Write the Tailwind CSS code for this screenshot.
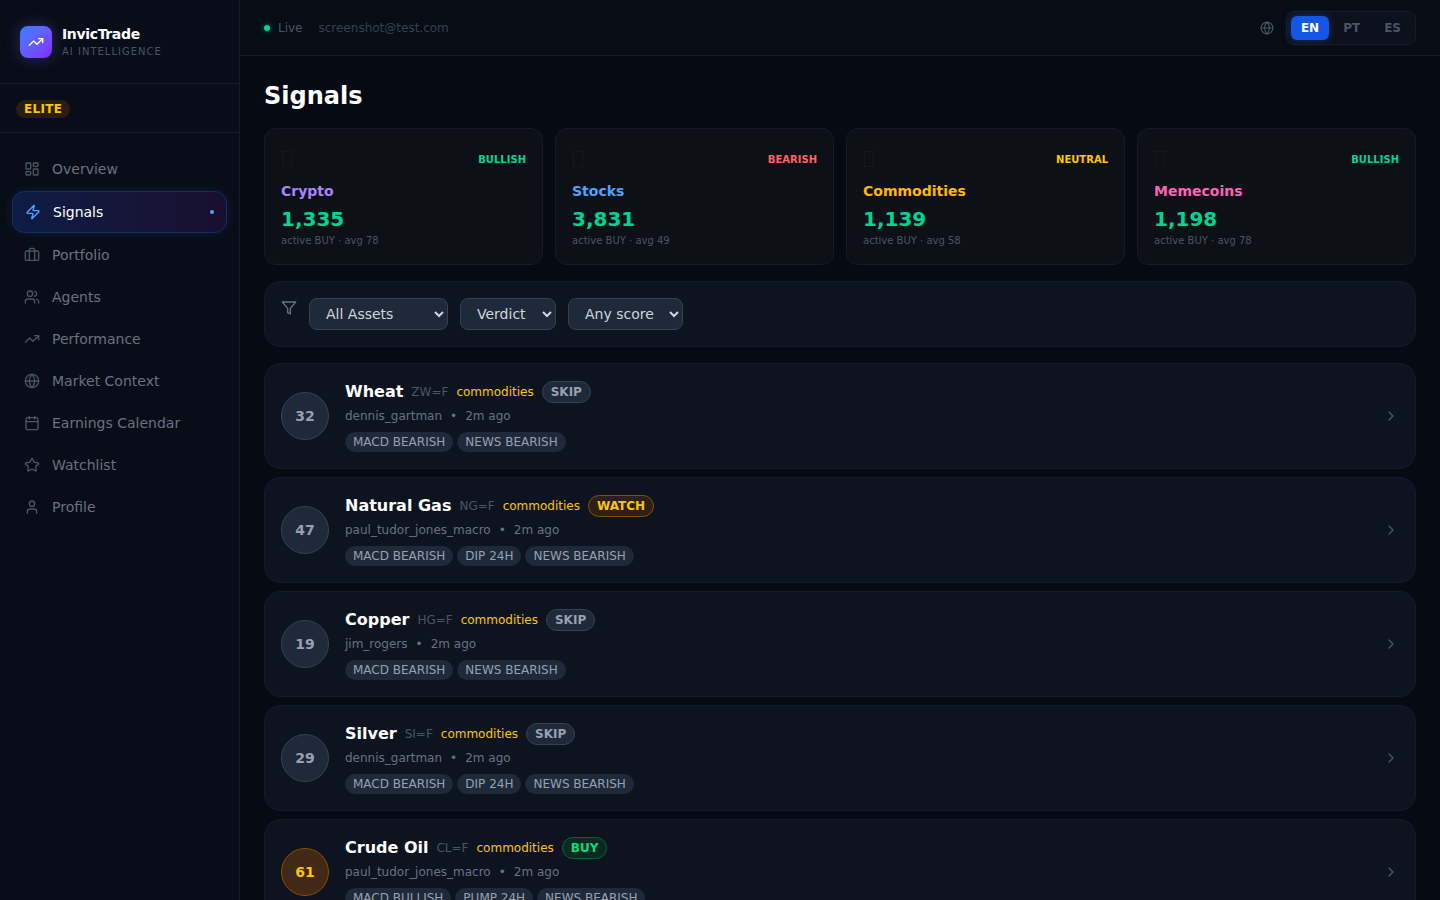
<!DOCTYPE html>
<html lang="en">
<head>
  <meta charset="UTF-8">
  <meta name="viewport" content="width=device-width, initial-scale=1.0">
  <title>InvicTrade - Signals</title>
  <script src="https://cdn.jsdelivr.net/npm/@tailwindcss/browser@4"></script>
</head>
<body class="bg-[#060a12] text-white font-['DejaVu_Sans',sans-serif]">
  <!-- Shared icon shapes -->
  <svg class="hidden" aria-hidden="true">
    <symbol id="trend" viewBox="0 0 24 24"><path d="M22 7 13.5 15.5 8.5 10.5 2 17"/><path d="M16 7h6v6"/></symbol>
    <symbol id="globe" viewBox="0 0 24 24"><circle cx="12" cy="12" r="10"/><path d="M12 2a14.5 14.5 0 0 0 0 20 14.5 14.5 0 0 0 0-20"/><path d="M2 12h20"/></symbol>
    <symbol id="chevron" viewBox="0 0 24 24"><path d="m9 18 6-6-6-6"/></symbol>
  </svg>

  <div class="flex min-h-screen">
    <!-- Sidebar -->
    <aside class="sticky top-0 h-screen w-60 shrink-0 bg-[#090d17] border-r border-[#141c28]">
      <div class="flex items-center gap-2.5 px-5 py-6 border-b border-[#141c28]">
        <div class="flex items-center justify-center w-8 h-8 rounded-lg bg-linear-to-br from-[#2b7fff] to-[#7f22fe] shadow-[0_0_16px_rgba(99,102,241,0.35)]">
          <svg class="w-4 h-4 text-white" fill="none" stroke="currentColor" stroke-width="2" stroke-linecap="round" stroke-linejoin="round"><use href="#trend"/></svg>
        </div>
        <div>
          <p class="text-sm font-bold tracking-tight">InvicTrade</p>
          <p class="text-[10px] leading-[15px] tracking-widest text-gray-600">AI INTELLIGENCE</p>
        </div>
      </div>
      <div class="px-4 py-3 border-b border-[#141c28]">
        <span class="text-xs font-bold tracking-wide px-2 py-0.5 rounded-full bg-[#2a1d14] text-yellow-400">ELITE</span>
      </div>
      <nav class="flex flex-col gap-0.5 px-3 py-4 text-sm text-gray-500">
        <a href="#" class="flex items-center gap-3 px-3 py-2.5 rounded-xl">
          <svg class="w-4 h-4 text-gray-600" viewBox="0 0 24 24" fill="none" stroke="currentColor" stroke-width="2" stroke-linecap="round" stroke-linejoin="round"><rect x="3" y="3" width="7" height="9" rx="1"/><rect x="14" y="3" width="7" height="5" rx="1"/><rect x="14" y="12" width="7" height="9" rx="1"/><rect x="3" y="16" width="7" height="5" rx="1"/></svg>
          Overview
        </a>
        <a href="#" class="flex items-center gap-3 px-3 py-2.5 rounded-xl border border-[#162d62] bg-linear-to-r from-[#0c1d45] to-[#180f2d] text-white shadow-[0_0_12px_rgba(59,130,246,0.12)]">
          <svg class="w-4 h-4 text-blue-400" viewBox="0 0 24 24" fill="none" stroke="currentColor" stroke-width="2" stroke-linecap="round" stroke-linejoin="round"><path d="M4 14a1 1 0 0 1-.78-1.63l9.9-10.2a.5.5 0 0 1 .86.46l-1.92 6.02A1 1 0 0 0 13 10h7a1 1 0 0 1 .78 1.63l-9.9 10.2a.5.5 0 0 1-.86-.46l1.92-6.02A1 1 0 0 0 11 14z"/></svg>
          Signals
          <span class="ml-auto w-1 h-1 rounded-full bg-blue-400"></span>
        </a>
        <a href="#" class="flex items-center gap-3 px-3 py-2.5 rounded-xl">
          <svg class="w-4 h-4 text-gray-600" viewBox="0 0 24 24" fill="none" stroke="currentColor" stroke-width="2" stroke-linecap="round" stroke-linejoin="round"><path d="M16 20V4a2 2 0 0 0-2-2h-4a2 2 0 0 0-2 2v16"/><rect width="20" height="14" x="2" y="6" rx="2"/></svg>
          Portfolio
        </a>
        <a href="#" class="flex items-center gap-3 px-3 py-2.5 rounded-xl">
          <svg class="w-4 h-4 text-gray-600" viewBox="0 0 24 24" fill="none" stroke="currentColor" stroke-width="2" stroke-linecap="round" stroke-linejoin="round"><path d="M16 21v-2a4 4 0 0 0-4-4H6a4 4 0 0 0-4 4v2"/><circle cx="9" cy="7" r="4"/><path d="M22 21v-2a4 4 0 0 0-3-3.87"/><path d="M16 3.13a4 4 0 0 1 0 7.75"/></svg>
          Agents
        </a>
        <a href="#" class="flex items-center gap-3 px-3 py-2.5 rounded-xl">
          <svg class="w-4 h-4 text-gray-600" fill="none" stroke="currentColor" stroke-width="2" stroke-linecap="round" stroke-linejoin="round"><use href="#trend"/></svg>
          Performance
        </a>
        <a href="#" class="flex items-center gap-3 px-3 py-2.5 rounded-xl">
          <svg class="w-4 h-4 text-gray-600" fill="none" stroke="currentColor" stroke-width="2" stroke-linecap="round" stroke-linejoin="round"><use href="#globe"/></svg>
          Market Context
        </a>
        <a href="#" class="flex items-center gap-3 px-3 py-2.5 rounded-xl">
          <svg class="w-4 h-4 text-gray-600" viewBox="0 0 24 24" fill="none" stroke="currentColor" stroke-width="2" stroke-linecap="round" stroke-linejoin="round"><path d="M8 2v4"/><path d="M16 2v4"/><rect width="18" height="18" x="3" y="4" rx="2"/><path d="M3 10h18"/></svg>
          Earnings Calendar
        </a>
        <a href="#" class="flex items-center gap-3 px-3 py-2.5 rounded-xl">
          <svg class="w-4 h-4 text-gray-600" viewBox="0 0 24 24" fill="none" stroke="currentColor" stroke-width="2" stroke-linecap="round" stroke-linejoin="round"><path d="M11.525 2.295a.53.53 0 0 1 .95 0l2.31 4.679a2.123 2.123 0 0 0 1.595 1.16l5.166.756a.53.53 0 0 1 .294.904l-3.736 3.638a2.123 2.123 0 0 0-.611 1.878l.882 5.14a.53.53 0 0 1-.771.56l-4.618-2.428a2.122 2.122 0 0 0-1.973 0L6.396 21.01a.53.53 0 0 1-.77-.56l.881-5.139a2.122 2.122 0 0 0-.611-1.879L2.16 9.795a.53.53 0 0 1 .294-.906l5.165-.755a2.122 2.122 0 0 0 1.597-1.16z"/></svg>
          Watchlist
        </a>
        <a href="#" class="flex items-center gap-3 px-3 py-2.5 rounded-xl">
          <svg class="w-4 h-4 text-gray-600" viewBox="0 0 24 24" fill="none" stroke="currentColor" stroke-width="2" stroke-linecap="round" stroke-linejoin="round"><path d="M19 21v-2a4 4 0 0 0-4-4H9a4 4 0 0 0-4 4v2"/><circle cx="12" cy="7" r="4"/></svg>
          Profile
        </a>
      </nav>
    </aside>

    <div class="flex-1 min-w-0">
      <!-- Top bar -->
      <header class="flex items-center justify-between h-14 px-6 bg-[#080c15] border-b border-[#141c28]">
        <div class="flex items-center gap-4 text-xs">
          <div class="flex items-center gap-2 text-gray-600">
            <span class="w-1.5 h-1.5 rounded-full bg-[#00d492] shadow-[0_0_6px_rgba(0,212,146,0.5)]"></span>
            Live
          </div>
          <span class="text-gray-700">screenshot@test.com</span>
        </div>
        <div class="flex items-center gap-3">
          <svg class="w-3.5 h-3.5 text-gray-600" fill="none" stroke="currentColor" stroke-width="2" stroke-linecap="round" stroke-linejoin="round"><use href="#globe"/></svg>
          <div class="flex gap-1 p-1 rounded-lg border border-[#141c28] bg-[#0c111c] text-xs font-bold text-gray-600">
            <button type="button" class="px-2.5 py-1 rounded-md bg-[#1556e6] text-white shadow-[0_0_10px_rgba(59,130,246,0.3)]">EN</button>
            <button type="button" class="px-2.5 py-1 rounded-md">PT</button>
            <button type="button" class="px-2.5 py-1 rounded-md">ES</button>
          </div>
        </div>
      </header>

      <main class="flex flex-col gap-4 p-6">
        <h1 class="text-2xl font-bold">Signals</h1>

        <!-- Market summary -->
        <div class="grid grid-cols-4 gap-3">
          <div class="p-4 rounded-xl border border-[#141c28] bg-[#0d1016]">
            <div class="flex items-center justify-between h-7 mb-2">
              <span class="w-2.5 h-4 ml-px border border-[#171717]"></span>
              <span class="text-[10px] font-bold text-emerald-400">BULLISH</span>
            </div>
            <p class="text-sm font-bold text-[#a684ff]">Crypto</p>
            <p class="mt-1 text-xl font-bold text-emerald-400">1,335</p>
            <p class="text-[10px] leading-[15px] text-gray-600">active BUY · avg 78</p>
          </div>
          <div class="p-4 rounded-xl border border-[#141c28] bg-[#0d1016]">
            <div class="flex items-center justify-between h-7 mb-2">
              <span class="w-2.5 h-4 ml-px border border-[#171717]"></span>
              <span class="text-[10px] font-bold text-red-400">BEARISH</span>
            </div>
            <p class="text-sm font-bold text-blue-400">Stocks</p>
            <p class="mt-1 text-xl font-bold text-emerald-400">3,831</p>
            <p class="text-[10px] leading-[15px] text-gray-600">active BUY · avg 49</p>
          </div>
          <div class="p-4 rounded-xl border border-[#141c28] bg-[#0d1016]">
            <div class="flex items-center justify-between h-7 mb-2">
              <span class="w-2.5 h-4 ml-px border border-[#171717]"></span>
              <span class="text-[10px] font-bold text-yellow-400">NEUTRAL</span>
            </div>
            <p class="text-sm font-bold text-amber-400">Commodities</p>
            <p class="mt-1 text-xl font-bold text-emerald-400">1,139</p>
            <p class="text-[10px] leading-[15px] text-gray-600">active BUY · avg 58</p>
          </div>
          <div class="p-4 rounded-xl border border-[#141c28] bg-[#0d1016]">
            <div class="flex items-center justify-between h-7 mb-2">
              <span class="w-2.5 h-4 ml-px border border-[#171717]"></span>
              <span class="text-[10px] font-bold text-emerald-400">BULLISH</span>
            </div>
            <p class="text-sm font-bold text-pink-400">Memecoins</p>
            <p class="mt-1 text-xl font-bold text-emerald-400">1,198</p>
            <p class="text-[10px] leading-[15px] text-gray-600">active BUY · avg 78</p>
          </div>
        </div>

        <!-- Filters -->
        <form class="flex flex-wrap gap-3 p-4 rounded-2xl border border-[#131c2a] bg-[#0d1420]">
          <svg class="w-4 h-4 mt-0.5 text-gray-500" viewBox="0 0 24 24" fill="none" stroke="currentColor" stroke-width="2" stroke-linecap="round" stroke-linejoin="round"><path d="M22 3H2l8 9.46V19l4 2v-8.54L22 3z"/></svg>
          <select aria-label="Asset class" class="px-3 py-1.5 rounded-lg border border-gray-700 bg-gray-800 text-sm text-gray-300">
            <option>All Assets</option>
            <option>Crypto</option>
            <option>Stocks</option>
            <option>Commodities</option>
            <option>Memecoins</option>
          </select>
          <select aria-label="Verdict" class="px-3 py-1.5 rounded-lg border border-gray-700 bg-gray-800 text-sm text-gray-300">
            <option>Verdict</option>
            <option>BUY</option>
            <option>WATCH</option>
            <option>SKIP</option>
          </select>
          <select aria-label="Minimum score" class="px-3 py-1.5 rounded-lg border border-gray-700 bg-gray-800 text-sm text-gray-300">
            <option>Any score</option>
            <option>50+</option>
            <option>70+</option>
          </select>
        </form>

        <!-- Signal list -->
        <div class="flex flex-col gap-2">
          <a href="#" class="flex items-center gap-4 p-4 rounded-2xl border border-[#131c2a] bg-[#0d1420]">
            <div class="flex items-center justify-center w-12 h-12 shrink-0 rounded-full border border-gray-700 bg-gray-800 text-sm font-bold text-gray-400">32</div>
            <div class="flex-1 min-w-0">
              <div class="flex items-center gap-2 text-xs">
                <h2 class="text-base font-bold">Wheat</h2>
                <span class="text-gray-600">ZW=F</span>
                <span class="text-yellow-400">commodities</span>
                <span class="px-2 py-0.5 rounded-full border border-gray-700 bg-gray-800 font-bold text-gray-400">SKIP</span>
              </div>
              <div class="flex gap-2 mt-1 text-xs text-gray-500"><span>dennis_gartman</span><span>•</span><span>2m ago</span></div>
              <div class="flex flex-wrap gap-1 mt-2 text-xs text-gray-400">
                <span class="px-2 py-0.5 rounded-full bg-gray-800">MACD BEARISH</span>
                <span class="px-2 py-0.5 rounded-full bg-gray-800">NEWS BEARISH</span>
              </div>
            </div>
            <svg class="w-4 h-4 shrink-0 text-gray-600" fill="none" stroke="currentColor" stroke-width="2" stroke-linecap="round" stroke-linejoin="round"><use href="#chevron"/></svg>
          </a>

          <a href="#" class="flex items-center gap-4 p-4 rounded-2xl border border-[#131c2a] bg-[#0d1420]">
            <div class="flex items-center justify-center w-12 h-12 shrink-0 rounded-full border border-gray-700 bg-gray-800 text-sm font-bold text-gray-400">47</div>
            <div class="flex-1 min-w-0">
              <div class="flex items-center gap-2 text-xs">
                <h2 class="text-base font-bold">Natural Gas</h2>
                <span class="text-gray-600">NG=F</span>
                <span class="text-yellow-400">commodities</span>
                <span class="px-2 py-0.5 rounded-full border border-yellow-800 bg-[#2d1f1b] font-bold text-yellow-400">WATCH</span>
              </div>
              <div class="flex gap-2 mt-1 text-xs text-gray-500"><span>paul_tudor_jones_macro</span><span>•</span><span>2m ago</span></div>
              <div class="flex flex-wrap gap-1 mt-2 text-xs text-gray-400">
                <span class="px-2 py-0.5 rounded-full bg-gray-800">MACD BEARISH</span>
                <span class="px-2 py-0.5 rounded-full bg-gray-800">DIP 24H</span>
                <span class="px-2 py-0.5 rounded-full bg-gray-800">NEWS BEARISH</span>
              </div>
            </div>
            <svg class="w-4 h-4 shrink-0 text-gray-600" fill="none" stroke="currentColor" stroke-width="2" stroke-linecap="round" stroke-linejoin="round"><use href="#chevron"/></svg>
          </a>

          <a href="#" class="flex items-center gap-4 p-4 rounded-2xl border border-[#131c2a] bg-[#0d1420]">
            <div class="flex items-center justify-center w-12 h-12 shrink-0 rounded-full border border-gray-700 bg-gray-800 text-sm font-bold text-gray-400">19</div>
            <div class="flex-1 min-w-0">
              <div class="flex items-center gap-2 text-xs">
                <h2 class="text-base font-bold">Copper</h2>
                <span class="text-gray-600">HG=F</span>
                <span class="text-yellow-400">commodities</span>
                <span class="px-2 py-0.5 rounded-full border border-gray-700 bg-gray-800 font-bold text-gray-400">SKIP</span>
              </div>
              <div class="flex gap-2 mt-1 text-xs text-gray-500"><span>jim_rogers</span><span>•</span><span>2m ago</span></div>
              <div class="flex flex-wrap gap-1 mt-2 text-xs text-gray-400">
                <span class="px-2 py-0.5 rounded-full bg-gray-800">MACD BEARISH</span>
                <span class="px-2 py-0.5 rounded-full bg-gray-800">NEWS BEARISH</span>
              </div>
            </div>
            <svg class="w-4 h-4 shrink-0 text-gray-600" fill="none" stroke="currentColor" stroke-width="2" stroke-linecap="round" stroke-linejoin="round"><use href="#chevron"/></svg>
          </a>

          <a href="#" class="flex items-center gap-4 p-4 rounded-2xl border border-[#131c2a] bg-[#0d1420]">
            <div class="flex items-center justify-center w-12 h-12 shrink-0 rounded-full border border-gray-700 bg-gray-800 text-sm font-bold text-gray-400">29</div>
            <div class="flex-1 min-w-0">
              <div class="flex items-center gap-2 text-xs">
                <h2 class="text-base font-bold">Silver</h2>
                <span class="text-gray-600">SI=F</span>
                <span class="text-yellow-400">commodities</span>
                <span class="px-2 py-0.5 rounded-full border border-gray-700 bg-gray-800 font-bold text-gray-400">SKIP</span>
              </div>
              <div class="flex gap-2 mt-1 text-xs text-gray-500"><span>dennis_gartman</span><span>•</span><span>2m ago</span></div>
              <div class="flex flex-wrap gap-1 mt-2 text-xs text-gray-400">
                <span class="px-2 py-0.5 rounded-full bg-gray-800">MACD BEARISH</span>
                <span class="px-2 py-0.5 rounded-full bg-gray-800">DIP 24H</span>
                <span class="px-2 py-0.5 rounded-full bg-gray-800">NEWS BEARISH</span>
              </div>
            </div>
            <svg class="w-4 h-4 shrink-0 text-gray-600" fill="none" stroke="currentColor" stroke-width="2" stroke-linecap="round" stroke-linejoin="round"><use href="#chevron"/></svg>
          </a>

          <a href="#" class="flex items-center gap-4 p-4 rounded-2xl border border-[#131c2a] bg-[#0d1420]">
            <div class="flex items-center justify-center w-12 h-12 shrink-0 rounded-full border border-yellow-800 bg-[#412817] text-sm font-bold text-yellow-400">61</div>
            <div class="flex-1 min-w-0">
              <div class="flex items-center gap-2 text-xs">
                <h2 class="text-base font-bold">Crude Oil</h2>
                <span class="text-gray-600">CL=F</span>
                <span class="text-yellow-400">commodities</span>
                <span class="px-2 py-0.5 rounded-full border border-green-800 bg-[#0d2723] font-bold text-green-400">BUY</span>
              </div>
              <div class="flex gap-2 mt-1 text-xs text-gray-500"><span>paul_tudor_jones_macro</span><span>•</span><span>2m ago</span></div>
              <div class="flex flex-wrap gap-1 mt-2 text-xs text-gray-400">
                <span class="px-2 py-0.5 rounded-full bg-gray-800">MACD BULLISH</span>
                <span class="px-2 py-0.5 rounded-full bg-gray-800">PUMP 24H</span>
                <span class="px-2 py-0.5 rounded-full bg-gray-800">NEWS BEARISH</span>
              </div>
            </div>
            <svg class="w-4 h-4 shrink-0 text-gray-600" fill="none" stroke="currentColor" stroke-width="2" stroke-linecap="round" stroke-linejoin="round"><use href="#chevron"/></svg>
          </a>
        </div>
      </main>
    </div>
  </div>
</body>
</html>
